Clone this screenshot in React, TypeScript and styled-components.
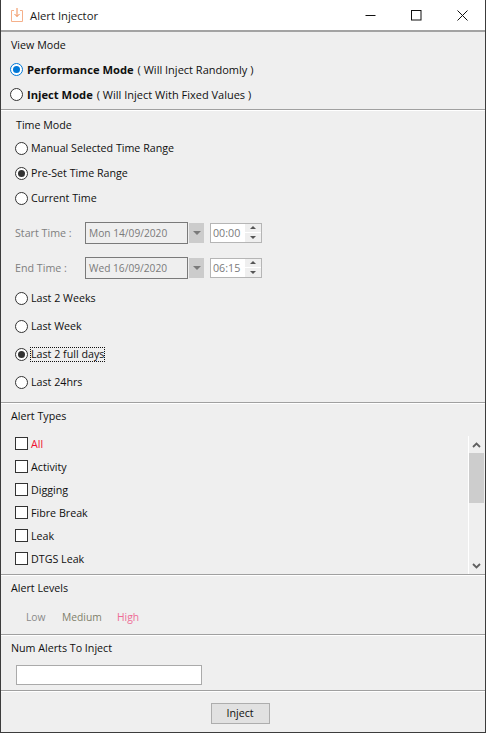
import React from "react";
import styled, { createGlobalStyle } from "styled-components";

const Global = createGlobalStyle`
  html, body { margin: 0; padding: 0; background: #efefef; }
  * { box-sizing: border-box; }
`;

const Win = styled.div`
  width: 486px;
  height: 733px;
  display: flex;
  flex-direction: column;
  background: #efefef;
  border: 1px solid #3c3c3c;
  border-top: 0;
  font-family: "Open Sans", "Noto Sans", sans-serif;
  font-size: 10.7px;
  color: #101010;
  overflow: hidden;
`;

const TitleBar = styled.div`
  height: 32px;
  flex: none;
  display: flex;
  align-items: center;
  background: #fff;
  border-bottom: 2px solid #a3a3a3;
  padding-left: 9px;
`;

const TitleText = styled.div`
  font-size: 11.3px;
  color: #1a1a1a;
  margin-left: 6px;
  flex: 1;
`;

const WinBtn = styled.div`
  width: 46px;
  height: 30px;
  display: flex;
  align-items: center;
  justify-content: center;
`;

const Section = styled.section<{ $h: number; $last?: boolean }>`
  height: ${(p) => p.$h}px;
  flex: none;
  border-bottom: ${(p) => (p.$last ? "0" : "1px solid #a0a0a0")};
  box-shadow: ${(p) => (p.$last ? "none" : "0 1px 0 #fff")};
  display: flex;
  flex-direction: column;
`;

const Heading = styled.div<{ $x: number; $h: number; $top?: number }>`
  height: ${(p) => p.$h}px;
  padding-left: ${(p) => p.$x}px;
  padding-top: ${(p) => p.$top ?? 0}px;
  display: flex;
  align-items: center;
  flex: none;
`;

const Row = styled.div<{ $h: number; $x?: number }>`
  height: ${(p) => p.$h}px;
  flex: none;
  display: flex;
  align-items: center;
  padding-left: ${(p) => p.$x ?? 14}px;
`;

const TimeBlock = styled.div`
  flex: none;
  display: flex;
  flex-direction: column;
  gap: 4px;
  padding: 6px 0 1px;
`;

const RadioMark = styled.span<{ $on?: "blue" | "dark"; $gap: number }>`
  width: 13px;
  height: 13px;
  flex: none;
  border-radius: 50%;
  background: #fff;
  border: 1px solid ${(p) => (p.$on === "blue" ? "#0078d7" : "#333")};
  display: flex;
  align-items: center;
  justify-content: center;
  margin-right: ${(p) => p.$gap}px;
  &::after {
    content: "";
    width: 7px;
    height: 7px;
    border-radius: 50%;
    display: ${(p) => (p.$on ? "block" : "none")};
    background: ${(p) => (p.$on === "blue" ? "#0078d7" : "#333")};
  }
`;

const Label = styled.span<{ $focus?: boolean }>`
  white-space: nowrap;
  outline: ${(p) => (p.$focus ? "1px dotted #111" : "none")};
  outline-offset: 0;
  line-height: 13px;
`;

const Strong = styled.b`
  font-size: 11.2px;
  font-weight: 700;
  margin-right: 4px;
`;

const Note = styled.span`
  font-size: 11px;
`;

const TimeLabel = styled.span`
  width: 70px;
  color: #808080;
  flex: none;
`;

const DateBox = styled.div`
  width: 103px;
  height: 22px;
  border: 1px solid #7a7a7a;
  background: #efefef;
  color: #7a7a7a;
  font-size: 10.2px;
  display: flex;
  align-items: center;
  padding-left: 3px;
  flex: none;
`;

const DateArrow = styled.div`
  width: 15px;
  height: 20px;
  margin: 0 6px 0 1px;
  background: #cccccc;
  display: flex;
  align-items: center;
  justify-content: center;
  flex: none;
  &::after {
    content: "";
    border-left: 4px solid transparent;
    border-right: 4px solid transparent;
    border-top: 4px solid #7a7a7a;
  }
`;

const TimeBox = styled.div`
  width: 52px;
  height: 20px;
  border: 1px solid #b5b5b5;
  background: #fff;
  color: #7a7a7a;
  display: flex;
  align-items: center;
  justify-content: space-between;
  padding-left: 2px;
  flex: none;
`;

const Spin = styled.div`
  width: 16px;
  height: 18px;
  display: flex;
  flex-direction: column;
  gap: 1px;
  background: #fff;
  flex: none;
`;

const SpinPart = styled.div<{ $up?: boolean }>`
  flex: 1;
  background: #efefef;
  display: flex;
  align-items: center;
  justify-content: center;
  &::after {
    content: "";
    border-left: 3px solid transparent;
    border-right: 3px solid transparent;
    ${(p) => (p.$up ? "border-bottom: 3px solid #555;" : "border-top: 3px solid #555;")}
  }
`;

const ListArea = styled.div`
  flex: 1;
  display: flex;
  min-height: 0;
`;

const CheckList = styled.div`
  flex: 1;
  padding-top: 4px;
  display: flex;
  flex-direction: column;
`;

const CheckRow = styled.div`
  height: 23px;
  flex: none;
  display: flex;
  align-items: center;
  padding-left: 14px;
`;

const CheckBox = styled.span`
  width: 13px;
  height: 13px;
  background: #fff;
  border: 1px solid #333;
  margin-right: 3px;
  flex: none;
`;

const CheckLabel = styled.span<{ $red?: boolean }>`
  color: ${(p) => (p.$red ? "#f01030" : "inherit")};
`;

const ScrollBar = styled.div`
  width: 16px;
  flex: none;
  margin-top: 8px;
  margin-right: 1px;
  border-left: 1px solid #fff;
  display: flex;
  flex-direction: column;
  align-items: stretch;
`;

const ScrollBtn = styled.div`
  height: 17px;
  flex: none;
  display: flex;
  align-items: center;
  justify-content: center;
`;

const Thumb = styled.div`
  height: 50px;
  flex: none;
  background: #cdcdcd;
`;

const Track = styled.div`
  flex: 1;
`;

const Levels = styled.div`
  display: flex;
  padding-left: 25px;
  margin-top: 7px;
  height: 18px;
  align-items: center;
  font-size: 10.3px;
`;

const Level = styled.span<{ $c: string; $w: number }>`
  color: ${(p) => p.$c};
  width: ${(p) => p.$w}px;
`;

const TextInput = styled.div`
  width: 186px;
  height: 20px;
  margin: 4px 0 0 15px;
  background: #fff;
  border: 1px solid #aaa;
  flex: none;
`;

const Footer = styled.div`
  flex: 1;
  display: flex;
  align-items: center;
  justify-content: center;
  padding: 3px 6px 0 0;
`;

const Btn = styled.div`
  width: 59px;
  height: 21px;
  background: #e1e1e1;
  border: 1px solid #adadad;
  display: flex;
  align-items: center;
  justify-content: center;
`;

const Radio = ({ on, children, focus, gap = 3 }: { on?: "blue" | "dark"; focus?: boolean; gap?: number; children: React.ReactNode }) => (
  <>
    <RadioMark $on={on} $gap={gap} />
    <Label $focus={focus}>{children}</Label>
  </>
);

const Chevron = ({ up }: { up?: boolean }) => (
  <svg width="9" height="6" viewBox="0 0 9 6" aria-hidden="true">
    <path d={up ? "M1 5L4.5 1.5L8 5" : "M1 1L4.5 4.5L8 1"} fill="none" stroke="#606060" strokeWidth="1.8" />
  </svg>
);

const TimeRow = ({ label, date, time }: { label: string; date: string; time: string }) => (
  <Row $h={31}>
    <TimeLabel>{label}</TimeLabel>
    <DateBox>{date}</DateBox>
    <DateArrow />
    <TimeBox>
      {time}
      <Spin>
        <SpinPart $up />
        <SpinPart />
      </Spin>
    </TimeBox>
  </Row>
);

export default function App() {
  return (
    <>
      <Global />
      <Win>
        <TitleBar>
          <svg width="14" height="16" viewBox="0 0 14 16" aria-hidden="true">
            <path d="M4 3.5H1.5V14.5H12.5V3.5H10" fill="none" stroke="#f5b08a" strokeWidth="1" />
            <path d="M7 1V9.5M4.5 7L7 9.5L9.5 7" fill="none" stroke="#f08a50" strokeWidth="1" />
          </svg>
          <TitleText>Alert Injector</TitleText>
          <WinBtn>
            <svg width="11" height="11" viewBox="0 0 11 11" aria-hidden="true">
              <path d="M0.5 5.5H10.5" stroke="#111" strokeWidth="1" />
            </svg>
          </WinBtn>
          <WinBtn>
            <svg width="11" height="11" viewBox="0 0 11 11" aria-hidden="true">
              <rect x="0.5" y="0.5" width="9.5" height="9.5" fill="none" stroke="#111" strokeWidth="1" />
            </svg>
          </WinBtn>
          <WinBtn>
            <svg width="11" height="11" viewBox="0 0 11 11" aria-hidden="true">
              <path d="M0.5 0.5L10.5 10.5M10.5 0.5L0.5 10.5" stroke="#111" strokeWidth="1" />
            </svg>
          </WinBtn>
        </TitleBar>

        <Section $h={78}>
          <Heading $x={10} $h={25}>View Mode</Heading>
          <Row $h={25} $x={9}>
            <Radio on="blue" gap={4}><Strong>Performance Mode</Strong><Note>( Will Inject Randomly )</Note></Radio>
          </Row>
          <Row $h={25} $x={9}>
            <Radio gap={4}><Strong>Inject Mode</Strong><Note>( Will Inject With Fixed Values )</Note></Radio>
          </Row>
        </Section>

        <Section $h={293}>
          <Heading $x={15} $h={26} $top={4}>Time Mode</Heading>
          <Row $h={25}><Radio>Manual Selected Time Range</Radio></Row>
          <Row $h={25}><Radio on="dark">Pre-Set Time Range</Radio></Row>
          <Row $h={25}><Radio>Current Time</Radio></Row>
          <TimeBlock>
            <TimeRow label="Start Time :" date="Mon 14/09/2020" time="00:00" />
            <TimeRow label="End Time :" date="Wed 16/09/2020" time="06:15" />
          </TimeBlock>
          <Row $h={28}><Radio>Last 2 Weeks</Radio></Row>
          <Row $h={28}><Radio>Last Week</Radio></Row>
          <Row $h={28}><Radio on="dark" focus>Last 2 full days</Radio></Row>
          <Row $h={28}><Radio>Last 24hrs</Radio></Row>
        </Section>

        <Section $h={172}>
          <Heading $x={10} $h={25}>Alert Types</Heading>
          <ListArea>
            <CheckList>
              <CheckRow><CheckBox /><CheckLabel $red>All</CheckLabel></CheckRow>
              <CheckRow><CheckBox /><CheckLabel>Activity</CheckLabel></CheckRow>
              <CheckRow><CheckBox /><CheckLabel>Digging</CheckLabel></CheckRow>
              <CheckRow><CheckBox /><CheckLabel>Fibre Break</CheckLabel></CheckRow>
              <CheckRow><CheckBox /><CheckLabel>Leak</CheckLabel></CheckRow>
              <CheckRow><CheckBox /><CheckLabel>DTGS Leak</CheckLabel></CheckRow>
            </CheckList>
            <ScrollBar>
              <ScrollBtn><Chevron up /></ScrollBtn>
              <Thumb />
              <Track />
              <ScrollBtn><Chevron /></ScrollBtn>
            </ScrollBar>
          </ListArea>
        </Section>

        <Section $h={60}>
          <Heading $x={10} $h={26}>Alert Levels</Heading>
          <Levels>
            <Level $c="#8a8a8a" $w={36}>Low</Level>
            <Level $c="#80806a" $w={55}>Medium</Level>
            <Level $c="#ee6c96" $w={40}>High</Level>
          </Levels>
        </Section>

        <Section $h={56}>
          <Heading $x={10} $h={26}>Num Alerts To Inject</Heading>
          <TextInput />
        </Section>

        <Footer>
          <Btn>Inject</Btn>
        </Footer>
      </Win>
    </>
  );
}
